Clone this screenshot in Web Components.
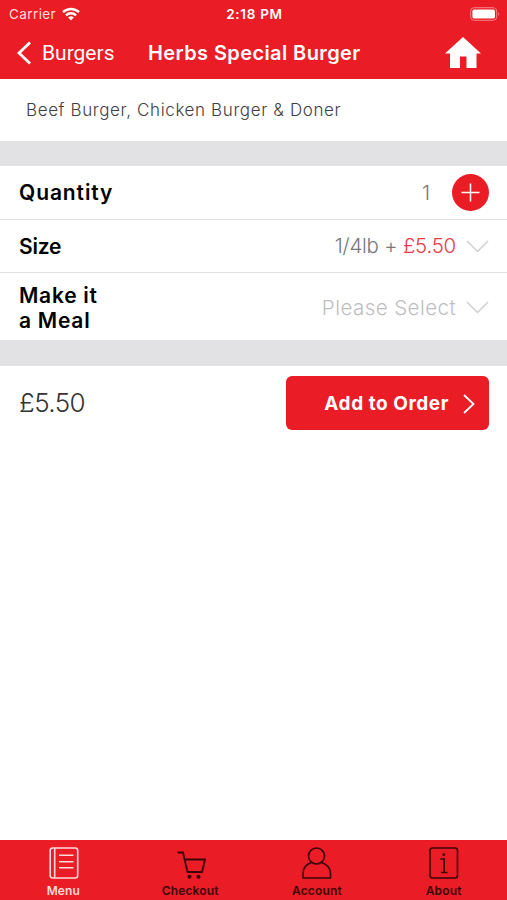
<!DOCTYPE html>
<html lang="en">
<head>
<meta charset="utf-8">
<meta name="viewport" content="width=device-width, initial-scale=1">
<title>Herbs Special Burger</title>
<style>
    body {
        margin: 0;
        background: #fff;
        font-family: Inter, "Liberation Sans", sans-serif;
    }
</style>
</head>
<body>
<burger-app></burger-app>

<script>
// Status bar
let StatusBarTemplate = document.createElement("template");
StatusBarTemplate.innerHTML = `
    <style>
        :host {
            display: grid;
            grid-template-columns: 1fr auto 1fr;
            align-items: center;
            height: 28px;
            padding: 0 7px 0 9px;
            box-sizing: border-box;
            color: #fff;
            font-size: 13.5px;
            line-height: 16px;
        }
        .carrier {
            display: flex;
            align-items: center;
            gap: 6px;
            color: #ffdcdc;
            letter-spacing: .4px;
        }
        .time {
            font-weight: 600;
            letter-spacing: .7px;
        }
        .battery {
            justify-self: end;
        }
        svg {
            display: block;
        }
    </style>
    <div class="carrier">
        <span>Carrier</span>
        <svg width="18" height="14" viewBox="0 0 18 14" fill="none" stroke="#fff" stroke-width="2.4">
            <path d="M1 5.2a11.5 11.5 0 0 1 16 0M3.9 8.3a7.3 7.3 0 0 1 10.2 0"/>
            <path d="M9 13.6l-2.8-3a4 4 0 0 1 5.6 0z" fill="#fff" stroke="none"/>
        </svg>
    </div>
    <div class="time"><slot></slot></div>
    <svg class="battery" width="30" height="14" viewBox="0 0 30 14">
        <rect x=".7" y=".7" width="26" height="12.6" rx="3.5" fill="none" stroke="#f5848a"/>
        <rect x="2.4" y="2.4" width="22.6" height="9.2" rx="1.8" fill="#fff"/>
        <path d="M28.2 4.8q1.8 2.2 0 4.4z" fill="#f5848a"/>
    </svg>`;

class StatusBar extends HTMLElement{
    constructor(){
        super();
        this.attachShadow({mode: 'open'});
        this.shadowRoot.appendChild(StatusBarTemplate.content.cloneNode(true));
    }
}
customElements.define("status-bar", StatusBar);

// Navigation bar
let NavBarTemplate = document.createElement("template");
NavBarTemplate.innerHTML = `
    <style>
        :host {
            display: flex;
            align-items: center;
            height: 49px;
            padding: 0 26px 0 17px;
            color: #fff;
            white-space: nowrap;
        }
        .back {
            display: flex;
            align-items: center;
            gap: 10px;
            width: 131px;
            font: 21px/26px Roboto, sans-serif;
        }
        h1 {
            margin: 0;
            font-size: 20px;
            font-weight: 600;
            line-height: 26px;
            letter-spacing: .4px;
        }
        .home {
            margin-left: auto;
        }
        svg {
            display: block;
        }
    </style>
    <div class="back">
        <svg width="15" height="24" viewBox="0 0 15 24" fill="none" stroke="#fff" stroke-width="2.8">
            <path d="M13 1.5L2 12l11 10.5"/>
        </svg>
        <span></span>
    </div>
    <h1></h1>
    <svg class="home" width="36" height="32" viewBox="0 0 36 32" fill="#fff">
        <path d="M18 0L36 16.5h-4.5v14.500H21.500V19.500h-6.500V31H5V16.500H0z"/>
    </svg>`;

class NavBar extends HTMLElement{
    constructor(){
        super();
        this.attachShadow({mode: 'open'});
        this.shadowRoot.appendChild(NavBarTemplate.content.cloneNode(true));
    }
    connectedCallback(){
        this.shadowRoot.querySelector("span").textContent = this.getAttribute("back");
        this.shadowRoot.querySelector("h1").textContent = this.getAttribute("heading");
    }
}
customElements.define("nav-bar", NavBar);

// Option rows
let OptionRowTemplate = document.createElement("template");
OptionRowTemplate.innerHTML = `
    <style>
        :host {
            display: flex;
            align-items: center;
            justify-content: space-between;
            height: var(--row-height, 54px);
            padding: 0 18px 0 19px;
            box-sizing: border-box;
            border-bottom: 1px solid #dedee0;
        }
        :host([tall]) {
            padding-top: 2px;
            border-bottom: none;
        }
        .label {
            color: #000;
            font-size: 21px;
            font-weight: 600;
            line-height: 25px;
            letter-spacing: var(--label-spacing, .9px);
            white-space: pre-line;
        }
        .value {
            display: flex;
            align-items: center;
            gap: 10px;
            color: #77777a;
            font-size: 20.5px;
            font-weight: 300;
            line-height: 26px;
            letter-spacing: var(--value-spacing, 0);
            white-space: nowrap;
        }
        svg {
            display: block;
        }
    </style>
    <div class="label"></div>
    <div class="value">
        <span><slot></slot></span>
        <slot name="control">
            <svg width="23" height="13" viewBox="0 0 23 13" fill="none" stroke="#cfcfd2" stroke-width="1.5">
                <path d="M1 1l10.5 10.5L22 1"/>
            </svg>
        </slot>
    </div>`;

class OptionRow extends HTMLElement{
    constructor(){
        super();
        this.attachShadow({mode: 'open'});
        this.shadowRoot.appendChild(OptionRowTemplate.content.cloneNode(true));
    }
    connectedCallback(){
        this.shadowRoot.querySelector(".label").textContent = this.getAttribute("label");
    }
}
customElements.define("option-row", OptionRow);

// Round plus button
let PlusButtonTemplate = document.createElement("template");
PlusButtonTemplate.innerHTML = `
    <style>
        :host {
            display: block;
            margin-left: 12px;
        }
        svg {
            display: block;
        }
    </style>
    <svg width="37" height="37" viewBox="0 0 37 37">
        <circle cx="18.5" cy="18.5" r="18.5" fill="#ea1c25"/>
        <path d="M18.5 9.5v18M9.5 18.5h18" stroke="#fff" stroke-width="1.5"/>
    </svg>`;

class PlusButton extends HTMLElement{
    constructor(){
        super();
        this.attachShadow({mode: 'open'});
        this.shadowRoot.appendChild(PlusButtonTemplate.content.cloneNode(true));
    }
}
customElements.define("plus-button", PlusButton);

// Price and order button
let OrderBarTemplate = document.createElement("template");
OrderBarTemplate.innerHTML = `
    <style>
        :host {
            display: flex;
            align-items: center;
            justify-content: space-between;
            padding: 10px 18px 0 19px;
        }
        .price {
            color: #333;
            font-size: 26px;
            font-weight: 300;
            line-height: 32px;
            letter-spacing: -.6px;
        }
        button {
            display: flex;
            align-items: center;
            justify-content: flex-end;
            gap: 14px;
            width: 203px;
            height: 54px;
            padding: 1px 14px 0 0;
            border: none;
            border-radius: 6px;
            background: #ea1c25;
            color: #fff;
            font: bold 19px/24px Inter, sans-serif;
            letter-spacing: .55px;
            white-space: nowrap;
        }
    </style>
    <div class="price"></div>
    <button>
        <slot></slot>
        <svg width="12" height="20" viewBox="0 0 12 20" fill="none" stroke="#fff" stroke-width="1.8">
            <path d="M1 1l9.5 9L1 19"/>
        </svg>
    </button>`;

class OrderBar extends HTMLElement{
    constructor(){
        super();
        this.attachShadow({mode: 'open'});
        this.shadowRoot.appendChild(OrderBarTemplate.content.cloneNode(true));
    }
    connectedCallback(){
        this.shadowRoot.querySelector(".price").textContent = this.getAttribute("price");
    }
}
customElements.define("order-bar", OrderBar);

// Tab bar items
const tabIcons = {
    menu: `<rect x="2.2" y="2" width="27.5" height="30" rx="2.5"/><path d="M6.7 2v30M11 9.3h14.5M11 15.8h14.5M11 21.7h14.5"/>`,
    checkout: `<path d="M2.500 6.5h5.500l4.500 19.500h14.500l3-12.500H10" stroke-width="1.8"/><g fill="currentColor" stroke="none"><circle cx="14.5" cy="30.7" r="2"/><circle cx="23.5" cy="30.7" r="2"/></g>`,
    account: `<circle cx="15.5" cy="10" r="8"/><path d="M10.5 16.5C4.5 18.5 2 22 2 27.5v4.500h27.500v-4.500c0-5.500-3-9-9-11" stroke-linejoin="round"/>`,
    about: `<rect x="2" y="2" width="27.5" height="30" rx="2.5"/><path d="M12.5 13h3.700v13M13 26.5h6.500"/><circle cx="15.8" cy="8.7" r="1.4" fill="currentColor" stroke="none"/>`
};

let TabItemTemplate = document.createElement("template");
TabItemTemplate.innerHTML = `
    <style>
        :host {
            display: flex;
            flex-direction: column;
            align-items: center;
            gap: 3px;
            padding-top: 6px;
            color: #3b0508;
            font-size: 12px;
            font-weight: 600;
            line-height: 15px;
            letter-spacing: .15px;
        }
        :host([active]) {
            color: #ffdada;
        }
        svg {
            display: block;
        }
    </style>
    <svg width="31" height="34" viewBox="0 0 31 34" fill="none" stroke="currentColor" stroke-width="1.6"></svg>
    <slot></slot>`;

class TabItem extends HTMLElement{
    constructor(){
        super();
        this.attachShadow({mode: 'open'});
        this.shadowRoot.appendChild(TabItemTemplate.content.cloneNode(true));
    }
    connectedCallback(){
        this.shadowRoot.querySelector("svg").innerHTML = tabIcons[this.getAttribute("icon")];
    }
}
customElements.define("tab-item", TabItem);

// Whole screen
let BurgerAppTemplate = document.createElement("template");
BurgerAppTemplate.innerHTML = `
    <style>
        :host {
            display: flex;
            flex-direction: column;
            height: 900px;
            background: #fff;
        }
        header {
            height: 79px;
            background: #ea1c25;
        }
        .description {
            margin: 0;
            height: 62px;
            padding-left: 26px;
            color: #414143;
            font-size: 17px;
            font-weight: 300;
            line-height: 62px;
            letter-spacing: .62px;
        }
        .band {
            height: 25px;
            background: #e2e2e4;
        }
        .size {
            --row-height: 53px;
            --label-spacing: -.2px;
            --value-spacing: -.25px;
        }
        .meal {
            --row-height: 67px;
            --label-spacing: .75px;
            --value-spacing: .45px;
        }
        .meal + .band {
            height: 26px;
        }
        .red {
            color: #e93a45;
        }
        .hint {
            color: #bebec2;
        }
        main {
            flex: 1;
        }
        nav {
            display: grid;
            grid-template-columns: repeat(4, 1fr);
            height: 60px;
            background: #ea1c25;
        }
    </style>
    <header>
        <status-bar>2:18 PM</status-bar>
        <nav-bar back="Burgers" heading="Herbs Special Burger"></nav-bar>
    </header>
    <main>
        <p class="description">Beef Burger, Chicken Burger &amp; Doner</p>
        <div class="band"></div>
        <option-row label="Quantity">1<plus-button slot="control"></plus-button></option-row>
        <option-row class="size" label="Size">1/4lb + <span class="red">£5.50</span></option-row>
        <option-row class="meal" label="Make it&#10;a Meal" tall><span class="hint">Please Select</span></option-row>
        <div class="band"></div>
        <order-bar price="£5.50">Add to Order</order-bar>
    </main>
    <nav>
        <tab-item icon="menu" active>Menu</tab-item>
        <tab-item icon="checkout">Checkout</tab-item>
        <tab-item icon="account">Account</tab-item>
        <tab-item icon="about">About</tab-item>
    </nav>`;

class BurgerApp extends HTMLElement{
    constructor(){
        super();
        this.attachShadow({mode: 'open'});
        this.shadowRoot.appendChild(BurgerAppTemplate.content.cloneNode(true));
    }
}
customElements.define("burger-app", BurgerApp);
</script>
</body>
</html>
